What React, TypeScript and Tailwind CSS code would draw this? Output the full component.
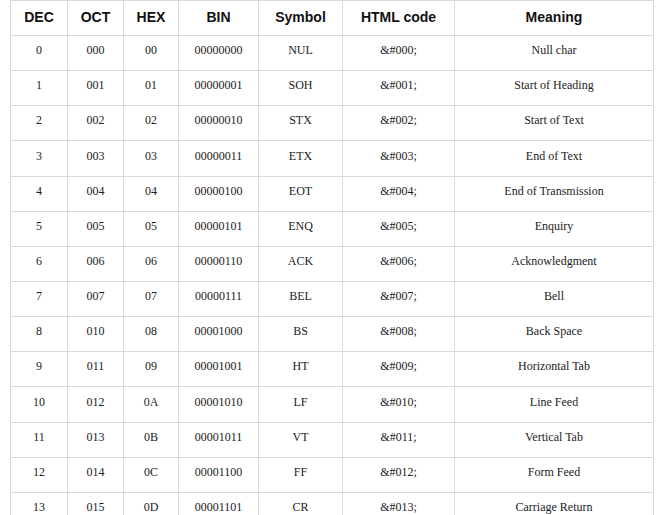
import React from "react";

const rows: [string, string, string, string, string, string, string][] = [
  ["0", "000", "00", "00000000", "NUL", "&#000;", "Null char"],
  ["1", "001", "01", "00000001", "SOH", "&#001;", "Start of Heading"],
  ["2", "002", "02", "00000010", "STX", "&#002;", "Start of Text"],
  ["3", "003", "03", "00000011", "ETX", "&#003;", "End of Text"],
  ["4", "004", "04", "00000100", "EOT", "&#004;", "End of Transmission"],
  ["5", "005", "05", "00000101", "ENQ", "&#005;", "Enquiry"],
  ["6", "006", "06", "00000110", "ACK", "&#006;", "Acknowledgment"],
  ["7", "007", "07", "00000111", "BEL", "&#007;", "Bell"],
  ["8", "010", "08", "00001000", "BS", "&#008;", "Back Space"],
  ["9", "011", "09", "00001001", "HT", "&#009;", "Horizontal Tab"],
  ["10", "012", "0A", "00001010", "LF", "&#010;", "Line Feed"],
  ["11", "013", "0B", "00001011", "VT", "&#011;", "Vertical Tab"],
  ["12", "014", "0C", "00001100", "FF", "&#012;", "Form Feed"],
  ["13", "015", "0D", "00001101", "CR", "&#013;", "Carriage Return"],
];

const headers = ["DEC", "OCT", "HEX", "BIN", "Symbol", "HTML code", "Meaning"];
const widths = ["w-[57px]", "w-[56px]", "w-[55px]", "w-[80px]", "w-[84px]", "w-[112px]", "w-[199px]"];

export default function App() {
  return (
    <div className="w-[669px] h-[515px] overflow-hidden bg-white">
      <div className="ml-[10px] w-[644px] border-l border-t border-[#dadada]">
        <div className="flex h-[35px]">
          {headers.map((h, i) => (
            <div
              key={h}
              className={`${widths[i]} shrink-0 flex items-center justify-center border-r border-b border-[#dadada] text-[14px] font-bold text-[#111] pb-[1px]`}
              style={{ fontFamily: '"Liberation Sans", Arial, sans-serif' }}
            >
              {h}
            </div>
          ))}
        </div>
        {rows.map((r, ri) => (
          <div key={ri} className={`flex ${ri === 3 || ri === 10 ? "h-[36px]" : "h-[35px]"}`}>
            {r.map((c, i) => (
              <div
                key={i}
                className={`${widths[i]} shrink-0 flex items-center justify-center border-r border-b border-[#dadada] text-[12px] text-[#222] pb-[6px]`}
                style={{ fontFamily: '"Liberation Serif", "Times New Roman", serif' }}
              >
                {c}
              </div>
            ))}
          </div>
        ))}
      </div>
    </div>
  );
}
